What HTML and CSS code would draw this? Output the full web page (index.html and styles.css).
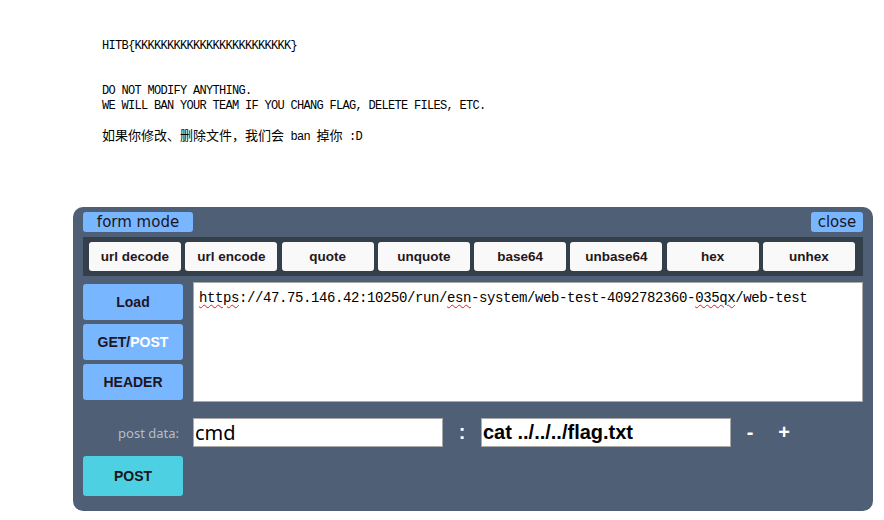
FILE: index.html
```html
<!DOCTYPE html>
<html>
<head>
<meta charset="utf-8">
<link rel="stylesheet" href="styles.css">
</head>
<body>
<div class="notice">
  <p class="l1 lat">HITB{KKKKKKKKKKKKKKKKKKKKKKKK}</p>
  <p class="l2 lat">DO NOT MODIFY ANYTHING.<br>WE WILL BAN YOUR TEAM IF YOU CHANG FLAG, DELETE FILES, ETC.</p>
  <p class="l3">如果你修改、删除文件，我们会<span class="lat"> ban </span>掉你<span class="lat"> :D</span></p>
</div>

<div class="hackbar">
  <div class="hb-head">
    <button class="hb-tab">form mode</button>
    <button class="hb-close">close</button>
  </div>
  <div class="hb-tools">
    <button class="tool">url decode</button>
    <button class="tool">url encode</button>
    <button class="tool">quote</button>
    <button class="tool">unquote</button>
    <button class="tool">base64</button>
    <button class="tool">unbase64</button>
    <button class="tool">hex</button>
    <button class="tool">unhex</button>
  </div>
  <div class="hb-main">
    <div class="hb-side">
      <button class="side-btn">Load</button>
      <button class="side-btn">GET/<span class="white">POST</span></button>
      <button class="side-btn">HEADER</button>
    </div>
    <div class="hb-url"><span class="sp">https</span>://47.75.146.42:10250/run/<span class="sp">esn</span>-system/web-test-4092782360-<span class="sp">035qx</span>/web-test</div>
  </div>
  <div class="hb-post">
    <label class="post-label">post data:</label>
    <div class="field field-key">cmd</div>
    <span class="sep">:</span>
    <div class="field field-val">cat ../../../flag.txt</div>
    <span class="pm">-</span>
    <span class="pm">+</span>
  </div>
  <div class="hb-submit">
    <button class="post-btn">POST</button>
  </div>
</div>
</body>
</html>
```
FILE: styles.css
```css
html, body {
  margin: 0;
  padding: 0;
  background: #ffffff;
}

.notice {
  padding-left: 102px;
  font-family: "Liberation Mono", "Noto Sans CJK SC", monospace;
  font-size: 13px;
  line-height: 15px;
  color: #000;
}

.notice p {
  margin: 0;
}

.notice .lat {
  font-family: "Liberation Mono", monospace;
  font-size: 12px;
  letter-spacing: -0.7px;
}

.notice .l1 { padding-top: 39px; }
.notice .l2 { margin-top: 30px; }
.notice .l3 {
  margin-top: 13px;
  font-family: "Noto Sans CJK SC", sans-serif;
}

.hackbar {
  margin: 62px 0 0 73px;
  width: 800px;
  box-sizing: border-box;
  padding: 5px 10px 15px;
  background: #4f5f75;
  border-radius: 10px;
}

button {
  border: 0;
  margin: 0;
  padding: 0;
  cursor: pointer;
}

.hb-head {
  display: flex;
  justify-content: space-between;
  height: 20px;
}

.hb-tab, .hb-close {
  height: 20px;
  background: #78b7ff;
  border-radius: 3px;
  font-family: "DejaVu Sans", sans-serif;
  font-size: 15px;
  line-height: 20px;
  color: #1c1420;
}

.hb-tab { width: 110px; }
.hb-close { width: 52px; }

.hb-tools {
  margin-top: 5px;
  background: #343f4c;
  padding: 5px 8px 5px 6px;
  display: grid;
  grid-template-columns: repeat(8, 1fr);
  column-gap: 4.3px;
}

.tool {
  height: 29px;
  background: #f9f9f9;
  border-radius: 3px;
  font-family: "Liberation Sans", sans-serif;
  font-weight: bold;
  font-size: 13.5px;
  color: #261619;
}

.hb-main {
  margin-top: 6px;
  display: flex;
  gap: 10px;
}

.hb-side {
  width: 100px;
  padding-top: 2px;
  display: flex;
  flex-direction: column;
  gap: 4px;
}

.side-btn {
  height: 36px;
  background: #78b7ff;
  border-radius: 3px;
  font-family: "Liberation Sans", sans-serif;
  font-weight: bold;
  font-size: 14px;
  color: #1f1422;
}

.side-btn .white { color: #ffffff; }

.hb-url {
  flex: 1;
  height: 120px;
  box-sizing: border-box;
  background: #ffffff;
  border: 1px solid #a9a9a9;
  padding: 7px 5px;
  font-family: "Liberation Mono", monospace;
  font-size: 14px;
  letter-spacing: -0.4px;
  line-height: 16px;
  color: #000;
}

.hb-url .sp {
  text-decoration: underline wavy #e02020;
  text-decoration-thickness: 1px;
  text-underline-offset: 2px;
}

.hb-post {
  margin-top: 16px;
  display: flex;
  align-items: center;
  height: 29px;
}

.post-label {
  width: 96px;
  padding-right: 4px;
  text-align: right;
  font-family: "Noto Sans", sans-serif;
  font-size: 13px;
  color: #b5bdc9;
  margin-right: 10px;
}

.field {
  width: 250px;
  height: 29px;
  box-sizing: border-box;
  background: #fff;
  border: 1px solid #a9a9a9;
  padding: 0 1px;
  font-size: 20px;
  line-height: 27px;
  color: #000;
}

.field-key {
  font-family: "Noto Sans", sans-serif;
}

.field-val {
  font-family: "Liberation Sans", sans-serif;
  font-weight: bold;
}

.sep {
  width: 38px;
  text-align: center;
  color: #fff;
  font-family: "Liberation Sans", sans-serif;
  font-weight: bold;
  font-size: 20px;
}

.pm {
  width: 34px;
  text-align: center;
  color: #fff;
  font-family: "Liberation Sans", sans-serif;
  font-weight: bold;
  font-size: 20px;
}

.field-val + .pm { margin-left: 2px; }

.hb-submit {
  margin-top: 9px;
}

.post-btn {
  width: 100px;
  height: 40px;
  background: #4dd0e2;
  border-radius: 3px;
  font-family: "Liberation Sans", sans-serif;
  font-weight: bold;
  font-size: 14px;
  color: #1a1418;
}
```
